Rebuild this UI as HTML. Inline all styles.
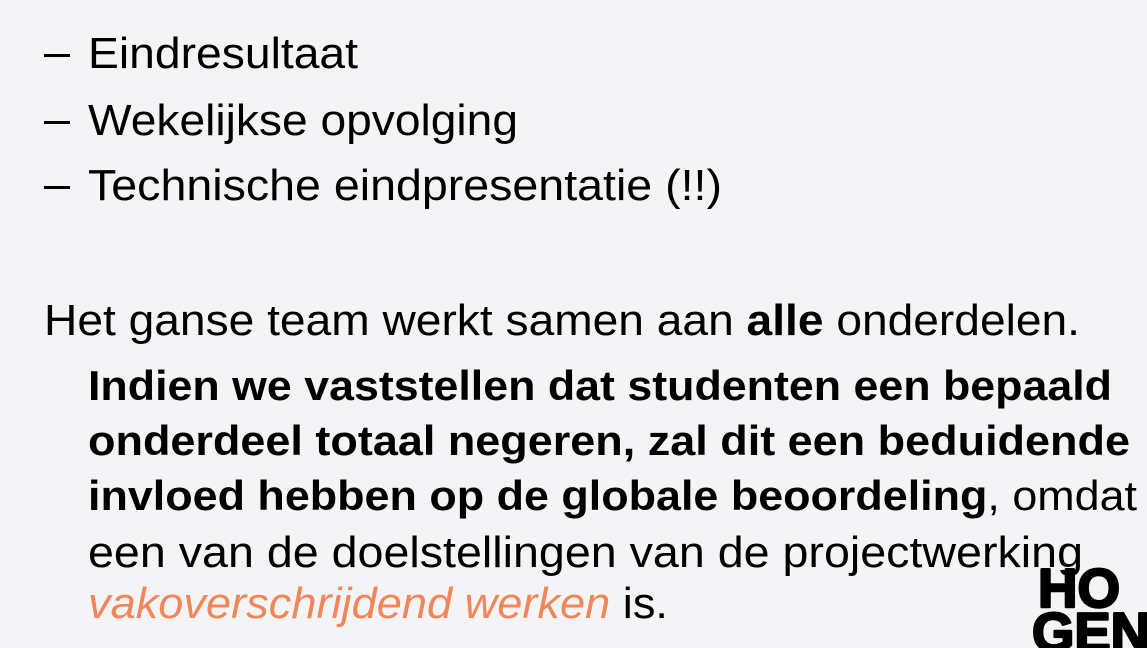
<!DOCTYPE html>
<html><head><meta charset="utf-8"><style>
html,body{margin:0;padding:0;background:#f4f4f6;width:1147px;height:648px;overflow:hidden}
svg{display:block}
text{font-family:"Liberation Sans",sans-serif;fill:#000}
</style></head><body>
<svg width="1147" height="648" viewBox="0 0 1147 648">
<rect x="44" y="54" width="26" height="3" fill="#000"/>
<rect x="44" y="121" width="26" height="3" fill="#000"/>
<rect x="44" y="186" width="26" height="3" fill="#000"/>
<text x="88" y="68" font-size="44" textLength="270" lengthAdjust="spacingAndGlyphs">Eindresultaat</text>
<text x="88" y="135" font-size="44" textLength="430" lengthAdjust="spacingAndGlyphs">Wekelijkse opvolging</text>
<text x="88" y="200" font-size="44" textLength="634" lengthAdjust="spacingAndGlyphs">Technische eindpresentatie (!!)</text>
<text x="44" y="335" font-size="44" textLength="1036" lengthAdjust="spacingAndGlyphs">Het ganse team werkt samen aan <tspan font-weight="bold">alle</tspan> onderdelen.</text>
<text x="88" y="400" font-size="42" font-weight="bold" textLength="1024" lengthAdjust="spacingAndGlyphs">Indien we vaststellen dat studenten een bepaald</text>
<text x="88" y="455" font-size="42" font-weight="bold" textLength="1042" lengthAdjust="spacingAndGlyphs">onderdeel totaal negeren, zal dit een beduidende</text>
<text x="88" y="510" font-size="42" textLength="1049" lengthAdjust="spacingAndGlyphs"><tspan font-weight="bold">invloed hebben op de globale beoordeling</tspan>, omdat</text>
<text x="88" y="567" font-size="44" textLength="995" lengthAdjust="spacingAndGlyphs">een van de doelstellingen van de projectwerking</text>
<text x="88" y="618" font-size="44" textLength="580" lengthAdjust="spacingAndGlyphs"><tspan font-style="italic" style="fill:#f0875a">vakoverschrijdend werken</tspan> is.</text>
<text x="1038" y="607" font-size="55" font-weight="bold" stroke="#000" stroke-width="2.5" stroke-linejoin="round" textLength="82" lengthAdjust="spacingAndGlyphs">HO</text>
<text x="1032" y="651" font-size="55" font-weight="bold" stroke="#000" stroke-width="2.5" stroke-linejoin="round" textLength="118" lengthAdjust="spacingAndGlyphs">GEN</text>
</svg>
</body></html>
